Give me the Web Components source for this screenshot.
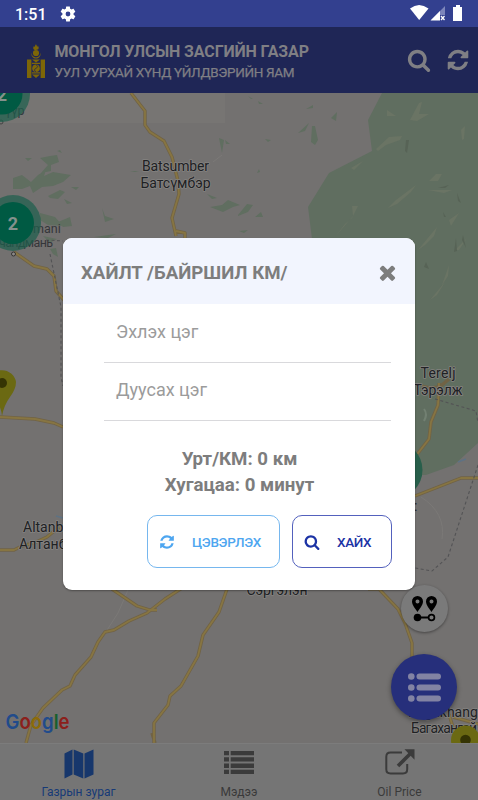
<!DOCTYPE html>
<html lang="mn">
<head>
<meta charset="utf-8">
<title>Газрын зураг</title>
<style>
html,body{margin:0;padding:0}
body{width:478px;height:800px;overflow:hidden;font-family:Roboto,"Liberation Sans",sans-serif}
</style>
</head>
<body>
<fuel-app></fuel-app>
<script>
const ICONS = {
  search: 'M1216 832q0-185-131.5-316.5t-316.5-131.5-316.5 131.5-131.5 316.5 131.5 316.5 316.5 131.5 316.5-131.5 131.5-316.5zm512 832q0 52-38 90t-90 38q-54 0-90-38l-343-342q-179 124-399 124-143 0-273.5-55.5t-225-150-150-225-55.5-273.5 55.5-273.5 150-225 225-150 273.5-55.5 273.5 55.5 225 150 150 225 55.5 273.5q0 220-124 399l343 343q37 37 37 90z',
  refresh: 'M1639 1056q0 5-1 7-64 268-268 434.5t-478 166.5q-146 0-282.5-55t-243.5-157l-129 129q-19 19-45 19t-45-19-19-45v-448q0-26 19-45t45-19h448q26 0 45 19t19 45-19 45l-137 137q71 66 161 102t187 36q134 0 250-65t186-179q11-17 53-117 8-23 30-23h192q13 0 22.5 9.5t9.5 22.5zm25-800v448q0 26-19 45t-45 19h-448q-26 0-45-19t-19-45 19-45l138-138q-148-137-349-137-134 0-250 65t-186 179q-11 17-53 117-8 23-30 23h-199q-13 0-22.5-9.5t-9.5-22.5v-7q65-268 270-434.5t480-166.5q146 0 284 55.5t245 156.5l130-129q19-19 45-19t45 19 19 45z',
  close: 'M1490 1322q0 40-28 68l-136 136q-28 28-68 28t-68-28l-294-294-294 294q-28 28-68 28t-68-28l-136-136q-28-28-28-68t28-68l294-294-294-294q-28-28-28-68t28-68l136-136q28-28 68-28t68 28l294 294 294-294q28-28 68-28t68 28l136 136q28 28 28 68t-28 68l-294 294 294 294q28 28 28 68z'
};
function define(name, html) {
  customElements.define(name, class extends HTMLElement {
    constructor() {
      super();
      this.attachShadow({mode: 'open'}).innerHTML = typeof html === 'function' ? '' : html;
    }
    connectedCallback() { if (typeof html === 'function') this.shadowRoot.innerHTML = html(this); }
  });
}

define('fa-icon', el => `<style>:host{display:block;flex:none;width:var(--s,24px);height:var(--s,24px)}svg{display:block;width:100%;height:100%;overflow:visible}</style>
<svg viewBox="0 0 1792 1792" fill="currentColor"><path d="${ICONS[el.getAttribute('name')]}"/></svg>`);

define('status-bar', `<style>
:host{display:flex;flex:none;height:27px;background:#33408f;color:#fff;align-items:center;justify-content:space-between;box-sizing:border-box;padding:0 14px 0 15px}
.l{display:flex;align-items:center}
.t{font-size:16px;font-weight:500;line-height:27px;padding-top:1px;width:44px}
svg{display:block}
</style>
<div class="l"><span class="t">1:51</span>
<svg width="18" height="18" viewBox="0 0 24 24" fill="#fff"><path d="M19.4 13c0-.3.1-.6.1-1s0-.7-.1-1l2.100-1.650c.2-.15.25-.42.12-.64l-2-3.460c-.12-.22-.39-.3-.61-.22l-2.490 1c-.52-.4-1.080-.73-1.690-.98l-.38-2.650C14.460 2.180 14.250 2 14 2h-4c-.25 0-.46.18-.49.42l-.38 2.650c-.61.25-1.170.59-1.690.98l-2.490-1c-.23-.09-.49 0-.61.22l-2 3.460c-.13.22-.07.49.12.64L4.570 11c-.04.32-.07.65-.07 1s.03.66.07 1l-2.110 1.650c-.19.15-.24.42-.12.64l2 3.460c.12.22.39.3.61.22l2.490-1c.52.4 1.080.73 1.690.98l.38 2.650c.03.24.24.42.49.42h4c.25 0 .46-.18.49-.42l.38-2.650c.61-.25 1.170-.59 1.690-.98l2.490 1c.23.09.49 0 .61-.22l2-3.460c.12-.22.07-.49-.12-.64zM12 15.200a3.200 3.200 0 1 1 0-6.400 3.200 3.200 0 0 1 0 6.400z"/></svg></div>
<svg width="54" height="17" viewBox="0 0 54 17"><path d="M0 3.600Q9-3.600 18.500 3.600L9.200 15z" fill="#fff"/><path d="M35 1v9H30v5H21z" fill="#7d86bb"/><path d="M30 6v9.500H20.500z" fill="#fff"/><path d="M31 11l3.500 4M34.500 11L31 15" stroke="#fff" stroke-width="1.300"/><path d="M46 0h4v2h2v14h-9V2h3z" fill="#fff"/></svg>`);

define('soyombo-mark', `<style>:host{display:block;width:18px;height:34px;flex:none}svg{display:block}</style>
<svg width="18" height="34" viewBox="0 0 18 34" fill="#7d6607"><path d="M8.900 0c.4 1.300 1.300 1.700 1.100 2.900.6-.2.800-.7.800-1.300C12.400 4 12 6 9 6 6 6 5.600 4 7 2c0 .6.200 1 .6 1.100C7.600 2 8.700 1.300 8.900 0z"/><circle cx="9" cy="9" r="3.100"/><path d="M4.400 8.500c.4 6.500 8.800 6.500 9.200 0 1 8-10.200 8-9.200 0z"/><path d="M0 15.500h4.400V34H0zM13.600 15.500H18V34h-4.400zM5 15.500h8l-4 2.900zM5 18.800h8v1.300H5zM5 28.300h8v1.300H5zM5 30.600h8L9 34z"/><circle cx="9" cy="24.200" r="3.800"/><path d="M9 20.800q3.200 1.800 0 3.500t0 3.500" fill="none" stroke="#262b50" stroke-width=".8"/></svg>`);

define('app-header', `<style>
:host{display:flex;flex:none;height:66px;background:#1f2656;color:#7f7f84;align-items:flex-start;box-sizing:border-box;padding:0 8px 0 27px}
soyombo-mark{margin:16.500px 9.500px 0 0}
.n{flex:1;padding-top:14px;white-space:nowrap}
h1{margin:0;font-size:16px;font-weight:700;line-height:22px;letter-spacing:-.14px}
p{margin:0;font-size:13.500px;line-height:18px;font-weight:400;letter-spacing:-.34px;-webkit-text-stroke:.25px}
.a{display:flex;gap:15px;padding-top:21px}
</style><soyombo-mark></soyombo-mark><div class="n"><h1>МОНГОЛ УЛСЫН ЗАСГИЙН ГАЗАР</h1><p>УУЛ УУРХАЙ ХҮНД ҮЙЛДВЭРИЙН ЯАМ</p></div>
<div class="a"><fa-icon name="search"></fa-icon><fa-icon name="refresh"></fa-icon></div>`);

define('map-canvas', `<style>:host{display:block;flex:1;min-height:0;overflow:hidden;background:#737170}svg{display:block}
text{font-family:Roboto,sans-serif}
.lb{font-size:14px;fill:#202124;stroke:#858381;stroke-width:1.600px;paint-order:stroke;stroke-linejoin:round;text-anchor:middle}
.st{text-anchor:start}
.sm{font-size:12.500px;fill:#35363a}
.r{fill:none;stroke:#716345;stroke-width:3.400;stroke-linejoin:round}.q{fill:none;stroke:#877542;stroke-width:1.800;stroke-linejoin:round}
.d{fill:none;stroke:#535355;stroke-width:1.100;stroke-dasharray:3 2.500}
</style>
<svg width="478" height="650" viewBox="0 93 478 650">
<rect x="0" y="93" width="225" height="30" fill="#777573"/>
<path fill="#606e60" d="M382 93l-14 27 4 31-43 22-21 34 4 32v236h114l28-10 24-22V93z"/>
<path fill="#606e60" d="M40 158l10-2 7-1 2 7-8 3 0 6-10 2 7-8zM25 158l7 0-4 3zM57 151l3-1 2 3zM13 178l9-3 9 7 7-7 8-5-2 6 9-4 18 3-8 7-10 4-11 1-9 6-3-7-8 3-9 0zM48 196l12-6 5 2-7 7-8-1zM71 187l8 0-3 3zM64 199l8 4-5 1zM40 213l15 4 8 9-15-1-8-5zM58 222l12-5 2 9-9 1zM102 208l3 8 9 3-9 3zM94 237l22-3-8 4zM50 249l6-1 2 9-5-3zM43 236l14 3-7 4zM130 171l9 0-4 1zM207 194l10 4-5 1zM210 207l12-2 6-5 12 5-7 2-10 5zM222 153l-3-15 5 2zM225 140l5 4-4 0zM238 215l9-11 6 1-5 7-10 4zM255 217l6-5 2 5zM239 231l9-1-4 3zM248 96l5 3-2 0zM258 101l5 3-4 0zM306 109l7-4 0 3zM331 118l6-6-1 9zM312 126l3 0 3 14-3 5-4-3zM298 133l11-10-4 8zM265 139l6 1-3 2zM257 173l2-4 1 3z"/>
<g fill="#6a7464"><path d="M376 149l13-12 13-1-2 4-14 5-8 6zM410 120l9-17 3-1-3 12 10 0-12 7zM387 110l9 6-9 0zM429 181l7-7 6 0-4 7zM388 208l8-8 20-15-5 7-14 12zM351 168l12-7-9 9zM335 237l18-21-1-10 6 0-6 12-7 6zM428 190l24 0-8 3zM449 220l10-7-8 13zM418 250l19-23-3 9-9 9zM461 130l4-4-1 13-2 1zM442 285l7-20-1 11zM430 300l15-18-8 13zM455 250l12-12-8 12z"/></g>
<g fill="#576356"><path d="M406 140l3 0-2 13-2-2zM438 188l11-3-4 3zM457 193l4 10-3-2zM443 212l3 5-2 0zM456 238l1 13-3 1zM463 235l3 13-4-8zM426 262l3 7-5-2z"/></g>
<path d="M424 409q4 5 0 12" fill="none" stroke="#728072" stroke-width="2"/>
<path d="M213 162l9-7M421 497q25 16 21 42M128 590l-10 23-18 28" fill="none" stroke="#7b7977"/>
<g class="r"><path d="M131 93l14 18v14l5 7 14 9 8 16 6 24 1 13-7 24 4 18m0-5l9 2v5M14 252l20 14 13 3 7 7 2 15 8 9M0 417l35 2 19 4 9 4M0 550h14l8-4 12-3 13-6 12-10M26 743l5-18 12-17 19-18 8-4 5-11 8-9 8-9 7-15 7-10 9-2 15-9 18-8 18-14 31-20M112 589l25 17 13 4h7M227 589l-8 23-16 23-5 21-17 30-11 10-2 9-14 18v20M152 733l3 10M368 589h11l19 20 7 14 7 20v17M415 496l46-18h17M449 379l-7 6q-8 5-20 1M439 383l-1 22-7 17-2 17-14 18M449 714l5 17M453 717l25 7"/></g><g class="q"><path d="M131 93l14 18v14l5 7 14 9 8 16 6 24 1 13-7 24 4 18m0-5l9 2v5M14 252l20 14 13 3 7 7 2 15 8 9M0 417l35 2 19 4 9 4M0 550h14l8-4 12-3 13-6 12-10M26 743l5-18 12-17 19-18 8-4 5-11 8-9 8-9 7-15 7-10 9-2 15-9 18-8 18-14 31-20M112 589l25 17 13 4h7M227 589l-8 23-16 23-5 21-17 30-11 10-2 9-14 18v20M368 589h11l19 20 7 14 7 20v17M415 496l46-18h17M439 383l-1 22-7 17-2 17-14 18M449 714l5 17M453 717l25 7"/></g>
<path class="d" d="M435 399l41 12 2 12M478 465l-30 92-16 14-17-3M46 240l17 1M50 254l11 53v70l2 9"/>
<path d="M458 462l8-3M56 516l7 2" stroke="#5e7284" stroke-width="1.500"/>
<text class="lb" x="175.500" y="171" textLength="67">Batsumber</text><text class="lb" x="175.500" y="188" textLength="70">Батсүмбэр</text>
<text class="lb" x="438" y="378" textLength="35">Terelj</text><text class="lb" x="438" y="394.500" textLength="49">Тэрэлж</text>
<text class="lb st" x="23" y="531.500">Altanbulag</text><text class="lb st" x="19" y="548.500">Алтанбулаг</text>
<text class="lb" x="277" y="595" textLength="61">Сэргэлэн</text>
<text class="lb st" x="408" y="717">Bagakhanga</text><text class="lb st" x="411" y="733" textLength="66">Багахангай</text>
<text x="414" y="511" font-size="14" fill="#202124">:</text>
<text class="sm" x="5" y="114.500">үүр</text><circle cx="1" cy="122" r="2" fill="none" stroke="#444"/>
<text class="sm" x="33" y="232.500">mani</text><text class="sm" x="-1" y="246.500" textLength="54">чандмань</text><circle cx="13.500" cy="254" r="2" fill="#8a8886" stroke="#333"/>
<circle cx="2" cy="94" r="28" fill="#1c604d" fill-opacity=".7"/><circle cx="2" cy="94" r="20.500" fill="#005a43"/><circle cx="13" cy="223" r="28" fill="#1c604d" fill-opacity=".7"/><circle cx="13" cy="223" r="21" fill="#005a43"/><circle cx="394" cy="470" r="28.500" fill="#285f4b"/>
<g font-size="18" font-weight="700" fill="#85918c" text-anchor="middle"><text x="2" y="101">2</text><text x="13" y="230">2</text></g>
<path d="M2 416q-1-10-8-20-6-8-6-14a14.200 14.200 0 0 1 28 0q0 7-6 15t-8 19z" fill="#6b6912"/><circle cx="2" cy="383" r="5" fill="#353404"/>
<circle cx="465.500" cy="740" r="14.500" fill="#6b6912"/><circle cx="465.500" cy="740" r="5.300" fill="#353404"/>
<text x="5.500" y="729.300" font-size="20.500" font-weight="600" textLength="64" lengthAdjust="spacingAndGlyphs" style="font-family:Inter,sans-serif"><tspan fill="#214b8b">G</tspan><tspan fill="#8b201b">o</tspan><tspan fill="#8d6b08">o</tspan><tspan fill="#214b8b">g</tspan><tspan fill="#17602d">l</tspan><tspan fill="#8b201b">e</tspan></text>
</svg>`);

define('map-fab', `<style>
:host{display:flex;position:absolute;border-radius:50%;align-items:center;justify-content:center}
:host([kind=route]){left:400.500px;top:585px;width:47px;height:47px;background:#7a7a7a;box-shadow:0 1px 3px #0006}
:host([kind=list]){left:391px;top:654px;width:66px;height:66px;background:#262f7b;box-shadow:0 2px 5px #0006}
</style><slot></slot>`);

define('tab-item', `<style>:host{display:flex;flex:1;flex-direction:column;align-items:center;color:#3a3a3a;font-size:12px;line-height:16px}
:host([active]){color:#173a77}.i{height:37px;padding-top:5px;box-sizing:border-box;display:flex;align-items:flex-start}.t{padding-top:5px;white-space:nowrap}</style>
<div class="i"><slot name="icon"></slot></div><div class="t"><slot></slot></div>`);

define('tab-bar', `<style>:host{display:flex;flex:none;height:57px;background:#757575;border-top:1px solid #7c7c7c;box-sizing:border-box}svg{display:block}
.a{flex:0 0 157px}.b{flex:0 0 164px}</style>
<tab-item class="a" active><svg slot="icon" width="30" height="30" viewBox="0 0 30 30" fill="#17376c"><path d="M.5 4.500L8.500.500v25l-8 4zM9.700.500l9.600 4v25l-9.600-4zM20.500 4.500l9-4v25l-9 4z"/></svg>Газрын зураг</tab-item>
<tab-item class="b"><svg slot="icon" width="30" height="30" viewBox="0 0 30 30" fill="#3b3b3b"><path d="M0 2h5v4.300H0zm6.700 0H30v4.300H6.700zM0 8.200h5v4.300H0zm6.700 0H30v4.300H6.700zM0 14.600h5v4.300H0zm6.700 0H30v4.300H6.700zM0 20.800h5v4.300H0zm6.700 0H30v4.300H6.700z"/></svg>Мэдээ</tab-item>
<tab-item><svg slot="icon" width="30" height="30" viewBox="0 0 30 30" fill="none" stroke="#3b3b3b"><path d="M17 3.500H5.500Q1.300 3.500 1.300 7.700v12.500q0 4.200 4.200 4.200H18q4.200 0 4.200-4.200V15" stroke-width="2"/><path d="M13 17L26 4" stroke-width="3.600"/><path d="M19.500.300h10v10.500z" fill="#3b3b3b" stroke="none"/></svg>Oil Price</tab-item>`);

define('outline-button', el => `<style>:host{display:flex;height:53px;box-sizing:border-box;border:1px solid currentColor;border-radius:10px;align-items:center;font-size:13.500px;font-weight:500;letter-spacing:-.3px;--s:16px;padding:0 11px}
:host([tone=light]){width:133px;color:#4ea6f0;border-color:#76b7ee}:host([tone=dark]){width:100px;color:#1c33a5;border-color:#5361bd}
span{flex:1;padding-top:1px;white-space:nowrap;padding-left:17.500px}</style>
<fa-icon name="${el.getAttribute('icon')}"></fa-icon><span><slot></slot></span>`);

define('place-field', `<style>:host{display:flex;height:58px;box-sizing:border-box;border-bottom:1px solid #d9d9dc;padding:0 12px;font-size:18px;color:#9b9b9b;align-items:flex-start;line-height:24px;padding-top:15px}</style><span><slot></slot></span>`);

define('search-dialog', `<style>
:host{display:flex;flex-direction:column;position:absolute;left:63px;top:238px;width:352px;height:351.500px;background:#fff;border-radius:9px;overflow:hidden;box-shadow:0 1px 2px #0005}
header{display:flex;flex:none;height:66px;box-sizing:border-box;background:#f2f5fe;align-items:center;justify-content:space-between;padding:2px 16px 0 18px;color:#7d7d7d;--s:23px}
h2{margin:0;padding-top:1px;font-size:18.670px;font-weight:700}
.b{display:flex;flex-direction:column;padding:1px 24px 0 41px}
.s{margin:26px 0 0 -16px;text-align:center;font-size:18.670px;font-weight:700;line-height:25.500px;color:#7d7d7d}
.a{display:flex;justify-content:flex-end;gap:12px;margin:17px -.5px 0 0}
</style>
<header><h2>ХАЙЛТ /БАЙРШИЛ КМ/</h2><fa-icon name="close"></fa-icon></header>
<div class="b"><place-field>Эхлэх цэг</place-field><place-field>Дуусах цэг</place-field>
<div class="s">Урт/КМ: 0 км<br>Хугацаа: 0 минут</div>
<div class="a"><outline-button tone="light" icon="refresh">ЦЭВЭРЛЭХ</outline-button><outline-button tone="dark" icon="search">ХАЙХ</outline-button></div></div>`);

define('fuel-app', `<style>:host{display:flex;flex-direction:column;position:relative;width:478px;height:800px;overflow:hidden}</style>
<status-bar></status-bar><app-header></app-header><map-canvas></map-canvas><tab-bar></tab-bar>
<map-fab kind="route"><svg width="25" height="26" viewBox="0 0 25 26"><path fill-rule="evenodd" d="M5.500 0a5.500 5.500 0 0 1 5.500 5.500C11 9 7.500 13 5.500 16 3.500 13 0 9 0 5.500A5.500 5.500 0 0 1 5.500 0zm0 3.500a2 2 0 1 0 0 4 2 2 0 0 0 0-4zM19.500 0A5.500 5.500 0 0 1 25 5.500c0 3.500-3.500 7.500-5.500 10.500C17.500 13 14 9 14 5.500A5.500 5.500 0 0 1 19.500 0zm0 3.500a2 2 0 1 0 0 4 2 2 0 0 0 0-4z"/><circle cx="5.500" cy="21.500" r="3.800"/><path d="M5 21.500h11" stroke="#000" stroke-width="2"/><circle cx="19.500" cy="21.500" r="2.900" fill="none" stroke="#000" stroke-width="1.700"/></svg></map-fab>
<map-fab kind="list"><svg width="33" height="29" viewBox="0 0 33 29" fill="#8283a3"><circle cx="3.300" cy="3.500" r="3.300"/><circle cx="3.300" cy="14.500" r="3.300"/><circle cx="3.300" cy="25.500" r="3.300"/><rect x="8.500" y=".4" width="24.500" height="6.200" rx="3"/><rect x="8.500" y="11.400" width="24.500" height="6.200" rx="3"/><rect x="8.500" y="22.400" width="24.500" height="6.200" rx="3"/></svg></map-fab>
<search-dialog></search-dialog>`);
</script>
</body>
</html>
